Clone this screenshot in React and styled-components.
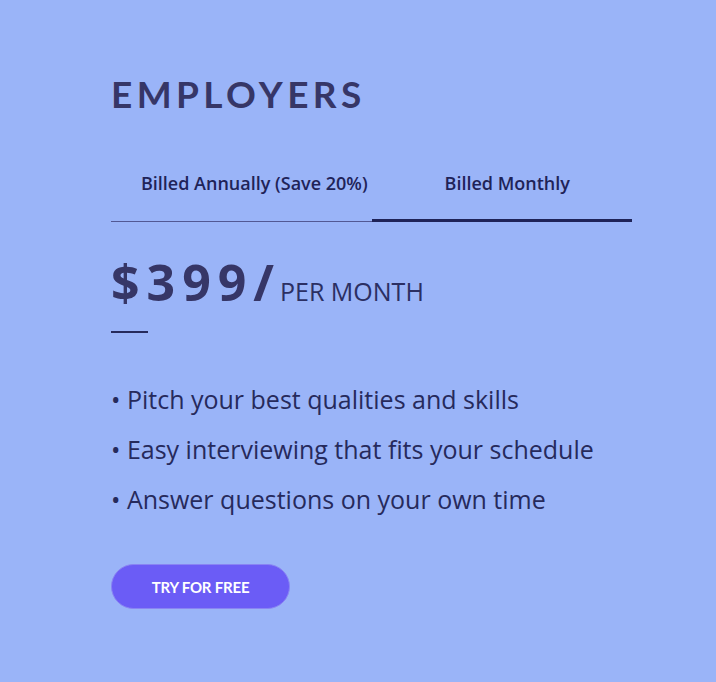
import React, {useState} from 'react';
import styled, {createGlobalStyle} from 'styled-components';

const Global = createGlobalStyle`
  html, body {
    margin: 0;
    padding: 0;
    background: #9ab4f8;
  }
`;

const Page = styled.div`
  width: 716px;
  height: 682px;
  background: #9ab4f8;
  box-sizing: border-box;
  padding: 72px 0 0 111px;
  color: #262a5c;
`;

const Heading = styled.h1`
  margin: 0;
  font-family: Lato, "Liberation Sans", sans-serif;
  font-weight: 700;
  font-size: 37px;
  line-height: 44px;
  letter-spacing: 4.4px;
  color: #363667;
`;

const Tabs = styled.div`
  display: flex;
  align-items: flex-end;
  width: 521px;
  margin-top: 55px;
`;

const Tab = styled.button`
  flex: 0 0 50%;
  box-sizing: border-box;
  background: none;
  border: none;
  border-bottom: ${p => (p.active ? '3px solid #1f2358' : '1px solid #525894')};
  padding: 0 0 ${p => (p.active ? '24px' : '26px')} ${p => p.indent}px;
  font-family: "Open Sans", sans-serif;
  font-weight: 600;
  font-size: 18px;
  line-height: 24px;
  color: #1f2358;
  cursor: pointer;
`;

const PriceRow = styled.div`
  display: flex;
  align-items: baseline;
  margin-top: 28px;
`;

const Price = styled.span`
  font-family: "Open Sans", sans-serif;
  font-weight: 700;
  font-size: 50px;
  line-height: 64px;
  letter-spacing: 7px;
  color: #363667;
`;

const Per = styled.span`
  font-family: "Open Sans", sans-serif;
  font-size: 25px;
  color: #2b2f63;
  margin-left: -1px;
`;

const Rule = styled.div`
  width: 37px;
  height: 2px;
  background: #262a5c;
  margin-top: 17px;
`;

const List = styled.ul`
  list-style: none;
  margin: 49px 0 0;
  padding: 0;
  display: flex;
  flex-direction: column;
  gap: 16px;
`;

const Item = styled.li`
  font-family: "Open Sans", sans-serif;
  font-size: 25px;
  line-height: 34px;
  color: #262a5c;
`;

const Button = styled.button`
  margin-top: 48px;
  width: 179px;
  height: 45px;
  border-radius: 23px;
  border: 1px solid #8a84f3;
  background: #6b5cf6;
  color: #fff;
  font-family: Lato, "Liberation Sans", sans-serif;
  font-weight: 700;
  font-size: 15px;
  letter-spacing: -0.2px;
  text-transform: uppercase;
  cursor: pointer;
`;

const points = [
  'Pitch your best qualities and skills',
  'Easy interviewing that fits your schedule',
  'Answer questions on your own time',
];

const App = () => {
  const [billing, setBilling] = useState('monthly');

  return (
    <Page>
      <Global />
      <Heading>EMPLOYERS</Heading>
      <Tabs>
        <Tab indent={26} active={billing === 'annual'} onClick={() => setBilling('annual')}>
          Billed Annually (Save 20%)
        </Tab>
        <Tab indent={11} active={billing === 'monthly'} onClick={() => setBilling('monthly')}>
          Billed Monthly
        </Tab>
      </Tabs>
      <PriceRow>
        <Price>$399/</Price>
        <Per>PER MONTH</Per>
      </PriceRow>
      <Rule />
      <List>
        {points.map((p) => (
          <Item key={p}>• {p}</Item>
        ))}
      </List>
      <Button>Try for free</Button>
    </Page>
  );
};

export default App;
